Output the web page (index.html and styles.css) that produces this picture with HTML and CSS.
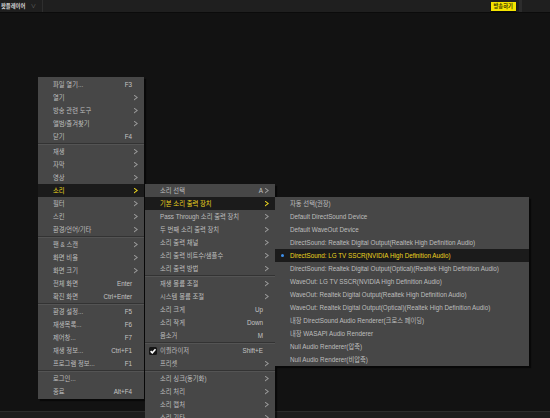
FILE: index.html
```html
<!DOCTYPE html>
<html lang="ko">
<head>
  <meta charset="UTF-8">
  <title>팟플레이어</title>
  <link rel="stylesheet" href="styles.css">
</head>
<body>
  <div class="app">
    <div class="titlebar">
      <div class="title">팟플레이어 <span class="caret">∨</span></div>
      <div class="spacer"></div>
      <div class="live">방송하기</div>
      <div class="edge"></div>
    </div>
    <div class="stage"></div>
    <div class="statusbar"></div>
  </div>

  <!-- main context menu -->
  <div class="menu menu-main">
    <div class="row"><span class="gut"></span><span class="label">파일 열기...</span><span class="key">F3</span><span class="arrow"></span></div>
    <div class="row"><span class="gut"></span><span class="label">열기</span><span class="key"></span><span class="arrow sub"></span></div>
    <div class="row"><span class="gut"></span><span class="label">방송 관련 도구</span><span class="key"></span><span class="arrow sub"></span></div>
    <div class="row"><span class="gut"></span><span class="label">앨범/즐겨찾기</span><span class="key"></span><span class="arrow sub"></span></div>
    <div class="row"><span class="gut"></span><span class="label">닫기</span><span class="key">F4</span><span class="arrow"></span></div>
    <div class="sep"></div>
    <div class="row"><span class="gut"></span><span class="label">재생</span><span class="key"></span><span class="arrow sub"></span></div>
    <div class="row"><span class="gut"></span><span class="label">자막</span><span class="key"></span><span class="arrow sub"></span></div>
    <div class="row"><span class="gut"></span><span class="label">영상</span><span class="key"></span><span class="arrow sub"></span></div>
    <div class="row active"><span class="gut"></span><span class="label">소리</span><span class="key"></span><span class="arrow sub"></span></div>
    <div class="row"><span class="gut"></span><span class="label">필터</span><span class="key"></span><span class="arrow sub"></span></div>
    <div class="row"><span class="gut"></span><span class="label">스킨</span><span class="key"></span><span class="arrow sub"></span></div>
    <div class="row"><span class="gut"></span><span class="label">환경/언어/기타</span><span class="key"></span><span class="arrow sub"></span></div>
    <div class="sep"></div>
    <div class="row"><span class="gut"></span><span class="label">팬 &amp; 스캔</span><span class="key"></span><span class="arrow sub"></span></div>
    <div class="row"><span class="gut"></span><span class="label">화면 비율</span><span class="key"></span><span class="arrow sub"></span></div>
    <div class="row"><span class="gut"></span><span class="label">화면 크기</span><span class="key"></span><span class="arrow sub"></span></div>
    <div class="row"><span class="gut"></span><span class="label">전체 화면</span><span class="key">Enter</span><span class="arrow"></span></div>
    <div class="row"><span class="gut"></span><span class="label">확진 화면</span><span class="key">Ctrl+Enter</span><span class="arrow"></span></div>
    <div class="sep"></div>
    <div class="row"><span class="gut"></span><span class="label">환경 설정...</span><span class="key">F5</span><span class="arrow"></span></div>
    <div class="row"><span class="gut"></span><span class="label">재생목록...</span><span class="key">F6</span><span class="arrow"></span></div>
    <div class="row"><span class="gut"></span><span class="label">제어창...</span><span class="key">F7</span><span class="arrow"></span></div>
    <div class="row"><span class="gut"></span><span class="label">재생 정보...</span><span class="key">Ctrl+F1</span><span class="arrow"></span></div>
    <div class="row"><span class="gut"></span><span class="label">프로그램 정보...</span><span class="key">F1</span><span class="arrow"></span></div>
    <div class="sep"></div>
    <div class="row"><span class="gut"></span><span class="label">로그인...</span><span class="key"></span><span class="arrow"></span></div>
    <div class="row"><span class="gut"></span><span class="label">종료</span><span class="key">Alt+F4</span><span class="arrow"></span></div>
  </div>

  <!-- 소리 submenu -->
  <div class="menu menu-sound">
    <div class="row"><span class="gut"></span><span class="label">소리 선택</span><span class="key">A</span><span class="arrow sub"></span></div>
    <div class="row active"><span class="gut"></span><span class="label">기본 소리 출력 장치</span><span class="key"></span><span class="arrow sub"></span></div>
    <div class="row"><span class="gut"></span><span class="label">Pass Through 소리 출력 장치</span><span class="key"></span><span class="arrow sub"></span></div>
    <div class="row"><span class="gut"></span><span class="label">두 번째 소리 출력 장치</span><span class="key"></span><span class="arrow sub"></span></div>
    <div class="row"><span class="gut"></span><span class="label">소리 출력 채널</span><span class="key"></span><span class="arrow sub"></span></div>
    <div class="row"><span class="gut"></span><span class="label">소리 출력 비트수/샘플수</span><span class="key"></span><span class="arrow sub"></span></div>
    <div class="row"><span class="gut"></span><span class="label">소리 출력 방법</span><span class="key"></span><span class="arrow sub"></span></div>
    <div class="sep"></div>
    <div class="row"><span class="gut"></span><span class="label">재생 볼륨 조절</span><span class="key"></span><span class="arrow sub"></span></div>
    <div class="row"><span class="gut"></span><span class="label">시스템 볼륨 조절</span><span class="key"></span><span class="arrow sub"></span></div>
    <div class="row"><span class="gut"></span><span class="label">소리 크게</span><span class="key">Up</span><span class="arrow"></span></div>
    <div class="row"><span class="gut"></span><span class="label">소리 작게</span><span class="key">Down</span><span class="arrow"></span></div>
    <div class="row"><span class="gut"></span><span class="label">음소거</span><span class="key">M</span><span class="arrow"></span></div>
    <div class="sep"></div>
    <div class="row">
      <span class="gut">
        <svg class="check" viewBox="0 0 8 8" width="8" height="8"><rect x="0" y="0" width="8" height="8" rx="1.5" fill="#161616"/><path d="M1.6 4.2 L3.3 5.8 L6.5 2.2" fill="none" stroke="#fff" stroke-width="1.6"/></svg>
      </span><span class="label">이퀄라이저</span><span class="key">Shift+E</span><span class="arrow"></span>
    </div>
    <div class="row"><span class="gut"></span><span class="label">프리셋</span><span class="key"></span><span class="arrow sub"></span></div>
    <div class="sep"></div>
    <div class="row"><span class="gut"></span><span class="label">소리 싱크(동기화)</span><span class="key"></span><span class="arrow sub"></span></div>
    <div class="row"><span class="gut"></span><span class="label">소리 처리</span><span class="key"></span><span class="arrow sub"></span></div>
    <div class="row"><span class="gut"></span><span class="label">소리 캡처</span><span class="key"></span><span class="arrow sub"></span></div>
    <div class="row"><span class="gut"></span><span class="label">소리 기타</span><span class="key"></span><span class="arrow sub"></span></div>
  </div>

  <!-- 기본 소리 출력 장치 submenu -->
  <div class="menu menu-device">
    <div class="row"><span class="gut"></span><span class="label">자동 선택(권장)</span></div>
    <div class="row"><span class="gut"></span><span class="label">Default DirectSound Device</span></div>
    <div class="row"><span class="gut"></span><span class="label">Default WaveOut Device</span></div>
    <div class="row"><span class="gut"></span><span class="label">DirectSound: Realtek Digital Output(Realtek High Definition Audio)</span></div>
    <div class="row active"><span class="gut"><span class="dot"></span></span><span class="label">DirectSound: LG TV SSCR(NVIDIA High Definition Audio)</span></div>
    <div class="row"><span class="gut"></span><span class="label">DirectSound: Realtek Digital Output(Optical)(Realtek High Definition Audio)</span></div>
    <div class="row"><span class="gut"></span><span class="label">WaveOut: LG TV SSCR(NVIDIA High Definition Audio)</span></div>
    <div class="row"><span class="gut"></span><span class="label">WaveOut: Realtek Digital Output(Realtek High Definition Audio)</span></div>
    <div class="row"><span class="gut"></span><span class="label">WaveOut: Realtek Digital Output(Optical)(Realtek High Definition Audio)</span></div>
    <div class="row"><span class="gut"></span><span class="label">내장 DirectSound Audio Renderer(크로스 페이딩)</span></div>
    <div class="row"><span class="gut"></span><span class="label">내장 WASAPI Audio Renderer</span></div>
    <div class="row"><span class="gut"></span><span class="label">Null Audio Renderer(압축)</span></div>
    <div class="row"><span class="gut"></span><span class="label">Null Audio Renderer(비압축)</span></div>
  </div>
</body>
</html>
```

FILE: styles.css
```css
html, body {
  margin: 0;
  padding: 0;
  width: 550px;
  height: 418px;
  overflow: hidden;
  background-color: #121212;
  font-family: "Liberation Sans", "Noto Sans CJK KR", sans-serif;
}
.app {
  display: flex;
  flex-direction: column;
  height: 418px;
}
.titlebar {
  display: flex;
  align-items: center;
  height: 12px;
  background-color: #1f1f1f;
  border-bottom: 1px solid #0b0b0b;
}
.title {
  height: 12px;
  line-height: 12px;
  padding: 0 6px 0 1px;
  font-size: 5.3px;
  font-weight: bold;
  color: #d8d8d8;
  border-right: 1px solid #2e2e2e;
  white-space: nowrap;
}
.caret {
  margin-left: 4px;
  color: #6a6a6a;
  font-weight: normal;
}
.spacer {
  flex: 1;
}
.live {
  height: 9px;
  line-height: 9px;
  padding: 0 3px;
  background-color: #f5e400;
  color: #3a3400;
  font-size: 5.3px;
  font-weight: bold;
  box-shadow: 0 1px 1px rgba(0, 0, 0, 0.6);
}
.edge {
  width: 3px;
  height: 12px;
  margin-left: 3px;
  margin-right: 28px;
  background-color: #2c2c2c;
}
.stage {
  flex: 1;
}
.statusbar {
  height: 6px;
  background-color: #1d1d1d;
  border-top: 1px solid #2c2c2c;
}

/* popup menus */
.menu {
  position: absolute;
  background-color: #474747;
  box-shadow: 2px 2px 1px rgba(0, 0, 0, 0.55);
  font-size: 6.3px;
  color: #bebebe;
}
.menu-main {
  left: 38px;
  top: 77px;
  width: 106px;
  padding: 1px 0;
}
.menu-sound {
  left: 145px;
  top: 184px;
  width: 130px;
  height: 250px;
}
.menu-device {
  left: 275px;
  top: 197px;
  width: 254px;
}
.row {
  display: flex;
  align-items: center;
  height: 13px;
  padding-right: 6px;
  white-space: nowrap;
}
.row.active {
  background-color: #1b1b1b;
  color: #ecd51f;
}
.gut {
  display: flex;
  align-items: center;
  justify-content: center;
  width: 15px;
  flex-shrink: 0;
}
.label {
  flex: 1;
}
.key {
  margin-left: 4px;
  color: #c4c4c4;
}
.arrow {
  width: 4px;
  height: 6px;
  margin-left: 2px;
}
.arrow.sub {
  background-color: #9a9a9a;
  clip-path: polygon(0 0, 100% 50%, 0 100%, 0 78%, 62% 50%, 0 22%);
}
.row.active .arrow.sub {
  background-color: #ecd51f;
}
.sep {
  height: 0;
  border-top: 1px solid #333;
  border-bottom: 1px solid #545454;
}
.dot {
  width: 3px;
  height: 3px;
  border-radius: 50%;
  background-color: #3d8fea;
}
.check {
  display: block;
}
```
